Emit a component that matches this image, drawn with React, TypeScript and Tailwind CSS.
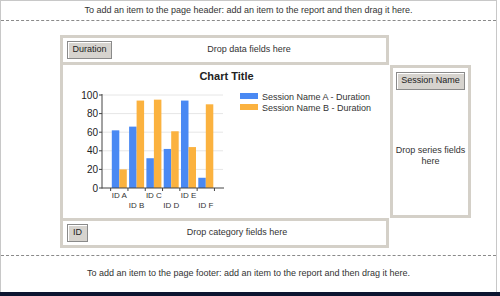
const blue = "#4a89f3";
const orange = "#fbb23f";

const groups = [
  { id: "ID A", a: 62, b: 20 },
  { id: "ID B", a: 66, b: 94 },
  { id: "ID C", a: 32, b: 95 },
  { id: "ID D", a: 42, b: 61 },
  { id: "ID E", a: 94, b: 44 },
  { id: "ID F", a: 11, b: 90 },
];

const y0 = 123;
const k = 0.93;
const step = 17.3;
const ax = 39;

function FieldButton({ label, className = "" }: { label: string; className?: string }) {
  return (
    <div
      className={
        "flex h-[18px] items-center justify-center border border-[#8a8a8a] bg-[#d6d3ce] text-[9px] text-[#222] shadow-[inset_1px_1px_0_#fff] " +
        className
      }
    >
      {label}
    </div>
  );
}

function Chart() {
  const ticks = [0, 20, 40, 60, 80, 100];
  return (
    <svg width="327" height="150" className="block">
      <text x="163.5" y="15" textAnchor="middle" fontSize="11" fontWeight="bold" fill="#222">
        Chart Title
      </text>
      {ticks.map((t) => (
        <g key={t}>
          {t > 0 && <line x1={ax} x2={160} y1={y0 - t * k} y2={y0 - t * k} stroke="#e6e6e6" />}
          <line x1={ax - 3} x2={ax} y1={y0 - t * k} y2={y0 - t * k} stroke="#444" />
          <text x={ax - 4} y={y0 - t * k + 3.5} textAnchor="end" fontSize="10" fill="#222">
            {t}
          </text>
        </g>
      ))}
      {groups.map((g, i) => {
        const cx = ax + step * (i + 1);
        return (
          <g key={g.id}>
            <rect x={cx - 7.5} y={y0 - g.a * k} width="7.5" height={g.a * k} fill={blue} />
            <rect x={cx} y={y0 - g.b * k} width="7.5" height={g.b * k} fill={orange} />
            <text x={cx} y={i % 2 === 0 ? 132.5 : 143} textAnchor="middle" fontSize="8" fill="#333">
              {g.id}
            </text>
          </g>
        );
      })}
      {Array.from({ length: 7 }).map((_, i) => {
        const x = ax + step * (i + 0.5);
        return <line key={i} x1={x} x2={x} y1={y0} y2={y0 + 3} stroke="#444" />;
      })}
      <line x1={ax} x2={ax} y1={y0 - 100 * k - 1} y2={y0 + 0.5} stroke="#444" />
      <line x1={ax} x2={161} y1={y0} y2={y0} stroke="#444" />
      <rect x="177" y="28" width="18" height="6" fill={blue} />
      <rect x="177" y="39" width="18" height="6" fill={orange} />
      <text x="199" y="34.5" fontSize="9" fill="#333">
        Session Name A - Duration
      </text>
      <text x="199" y="45.5" fontSize="9" fill="#333">
        Session Name B - Duration
      </text>
    </svg>
  );
}

export default function App() {
  return (
    <div className="flex h-[296px] w-[500px] flex-col bg-white font-['Liberation_Sans',Arial,sans-serif] text-[#333]">
      <div className="flex w-[497px] flex-1 flex-col border-x border-t border-[#c8c8c8]">
        <div className="flex h-[19px] items-center justify-center text-[9px]">
          To add an item to the page header: add an item to the report and then drag it here.
        </div>
        <div className="border-t border-dashed border-[#8a8a8a]" />

        <div className="h-[234px] pl-[59px] pt-[14px]">
          <div className="grid grid-cols-[329px_82px] grid-rows-[30px_153px_30px]">
            <div className="flex items-center border-[3px] border-[#d4d0c8] pl-[4px]">
              <FieldButton label="Duration" className="w-[45px]" />
              <div className="flex-1 text-center text-[9px]">Drop data fields here</div>
            </div>
            <div />

            <div className="border-l-[3px] border-[#d4d0c8]">
              <Chart />
            </div>
            <div className="ml-px flex flex-col items-center border-[3px] border-[#d4d0c8] pt-[4px]">
              <FieldButton label="Session Name" className="h-[17px] w-[69px]" />
              <div className="flex flex-1 items-center pt-[6px] text-center text-[9px] leading-[11px]">
                Drop series fields here
              </div>
            </div>

            <div className="flex items-center border-[3px] border-[#d4d0c8] pl-[4px]">
              <FieldButton label="ID" className="w-[21px]" />
              <div className="flex-1 text-center text-[9px]">Drop category fields here</div>
            </div>
            <div />
          </div>
        </div>

        <div className="border-t border-dashed border-[#8a8a8a]" />
        <div className="flex flex-1 items-center justify-center text-[9px]">
          To add an item to the page footer: add an item to the report and then drag it here.
        </div>
      </div>
      <div className="h-[4px] bg-[#0d1530]" />
    </div>
  );
}
